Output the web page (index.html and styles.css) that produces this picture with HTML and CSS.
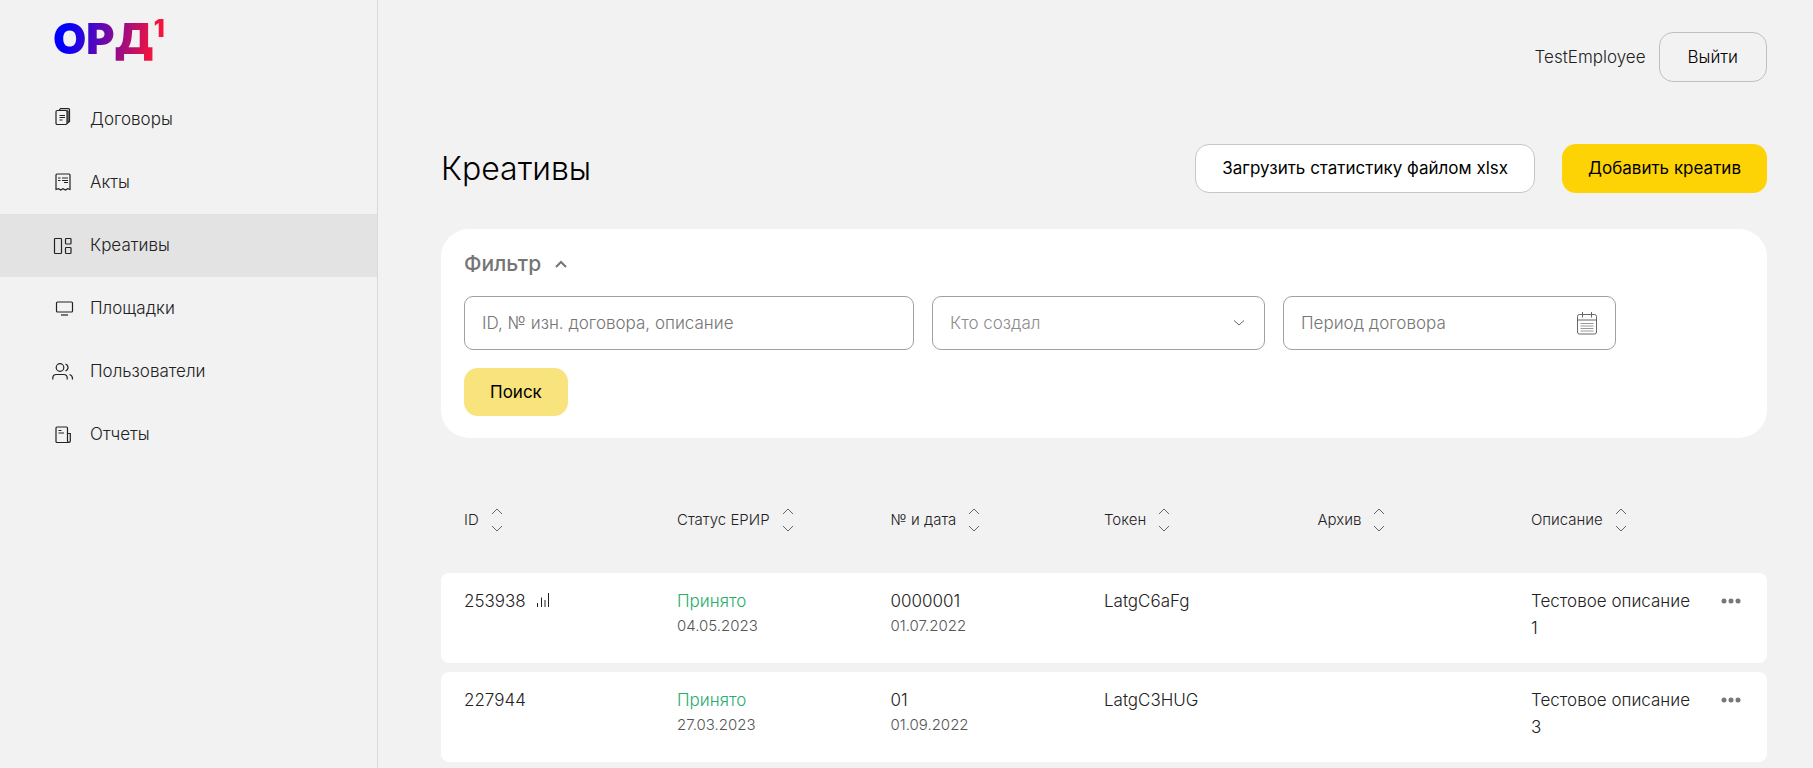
FILE: index.html
```html
<!DOCTYPE html>
<html lang="ru">
<head>
<meta charset="utf-8">
<meta name="viewport" content="width=device-width, initial-scale=1">
<title>ОРД — Креативы</title>
<link rel="stylesheet" href="styles.css">
</head>
<body>
<svg class="sprite" aria-hidden="true">
  <symbol id="sort" viewBox="0 0 12 26"><path d="M1 7l5-5 5 5M1 19l5 5 5-5"/></symbol>
  <symbol id="dots" viewBox="0 0 20 6"><circle cx="3" cy="3" r="2.5"/><circle cx="10" cy="3" r="2.5"/><circle cx="17" cy="3" r="2.5"/></symbol>
</svg>
<div class="app">
  <aside class="sidebar">
    <a class="logo" href="#" aria-label="ОРД 1"><span class="logo-word">ОРД</span><span class="logo-one">1</span></a>
    <nav class="nav">
      <a class="nav-item" href="#"><svg class="icon" viewBox="0 0 24 24"><rect x="4" y="2.500" width="11" height="14" rx="1.2"/><path d="M7 2.500L8.500 .6h8a1 1 0 0 1 1 1v11.900l-2.500 2M15 2.500l1 .8v11.500M7.500 7.500h5.500M7.500 9.500h5.500M7.500 12h3"/></svg>Договоры</a>
      <a class="nav-item" href="#"><svg class="icon" viewBox="0 0 24 24"><path d="M4 18.500V4a1 1 0 0 1 1-1h12a1 1 0 0 1 1 1v14.500l-2.300-.8-2.300 1.300-2.400-1.300-2.300 1.300-2.300-1.300-2.400.8z"/><path d="M6 7h2.500M10 7h6M6 9.500h2.500M10 9.500h6M12 11.500h4"/></svg>Акты</a>
      <a class="nav-item nav-item--active" href="#" aria-current="page"><svg class="icon" viewBox="0 0 24 24"><rect x="2.500" y="4.500" width="7" height="15" rx=".8"/><rect x="13.500" y="4.500" width="5.500" height="5.500" rx=".8"/><rect x="13.500" y="13.500" width="5.500" height="6" rx=".8"/></svg>Креативы</a>
      <a class="nav-item" href="#"><svg class="icon" viewBox="0 0 24 24"><rect x="4.500" y="5" width="16" height="10" rx="1"/><path d="M9 18h7"/></svg>Площадки</a>
      <a class="nav-item" href="#"><svg class="icon" viewBox="0 0 24 24"><circle cx="8" cy="7.500" r="3.800"/><path d="M.8 19.500v-1.500a3.500 3.500 0 0 1 3.500-3.500h7.400a3.500 3.500 0 0 1 3.500 3.500v1.500M13.500 4q2.500 1 2.500 3.500T13.500 11M17.500 14.500q3 1 3 4v1"/></svg>Пользователи</a>
      <a class="nav-item" href="#"><svg class="icon" viewBox="0 0 24 24"><path d="M17 19.500H5a1 1 0 0 1-1-1V5a1 1 0 0 1 1-1h9.500a1 1 0 0 1 1 1v13a1.400 1.400 0 0 0 2.800 0v-7.500h-2.800M6.500 7.500h3M6.500 10h5.500"/></svg>Отчеты</a>
    </nav>
  </aside>
  <main class="main">
    <header class="topbar">
      <span class="user">TestEmployee</span>
      <button class="btn btn--ghost" type="button">Выйти</button>
    </header>
    <div class="heading">
      <h1 class="title">Креативы</h1>
      <button class="btn btn--white" type="button">Загрузить статистику файлом xlsx</button>
      <button class="btn btn--primary" type="button">Добавить креатив</button>
    </div>
    <form class="filter">
      <button class="filter-toggle" type="button" aria-expanded="true">Фильтр<svg class="toggle-icon" viewBox="0 0 14 10"><path d="M2 8l5-5 5 5"/></svg></button>
      <div class="filter-fields">
        <input class="field field--wide" type="text" aria-label="Поиск" placeholder="ID, № изн. договора, описание">
        <div class="field-wrap">
          <select class="field field--select" aria-label="Кто создал"><option>Кто создал</option></select>
          <svg class="field-icon field-icon--chevron" viewBox="0 0 12 8"><path d="M1 1.500l5 4.500 5-4.500"/></svg>
        </div>
        <div class="field-wrap">
          <input class="field" type="text" aria-label="Период договора" placeholder="Период договора">
          <svg class="field-icon field-icon--calendar" viewBox="0 0 22 24"><rect x="1.500" y="3.500" width="19" height="19.500" rx="2"/><path d="M1.500 9h19M6.500 1v5.500M15.500 1v5.500"/><path class="thin" d="M4.500 12.500h13M4.500 15h13M4.500 17.500h13M4.500 20h13"/></svg>
        </div>
      </div>
      <button class="btn btn--search" type="submit">Поиск</button>
    </form>
    <table class="table">
      <colgroup><col class="col-first"><col class="col"><col class="col"><col class="col"><col class="col"><col class="col-desc"><col></colgroup>
      <thead>
        <tr>
          <th><button class="sort" type="button">ID<svg class="sort-icon"><use href="#sort"/></svg></button></th>
          <th><button class="sort" type="button">Статус ЕРИР<svg class="sort-icon"><use href="#sort"/></svg></button></th>
          <th><button class="sort" type="button">№ и дата<svg class="sort-icon"><use href="#sort"/></svg></button></th>
          <th><button class="sort" type="button">Токен<svg class="sort-icon"><use href="#sort"/></svg></button></th>
          <th><button class="sort" type="button">Архив<svg class="sort-icon"><use href="#sort"/></svg></button></th>
          <th colspan="2"><button class="sort" type="button">Описание<svg class="sort-icon"><use href="#sort"/></svg></button></th>
        </tr>
      </thead>
      <tbody>
        <tr>
          <td>253938<svg class="stats" viewBox="0 0 14 15"><path d="M1.500 11v4M5.500 5.500V15M9 8v7M12.500 1v14"/></svg></td>
          <td><span class="ok">Принято</span><span class="date">04.05.2023</span></td>
          <td>0000001<span class="date">01.07.2022</span></td>
          <td>LatgC6aFg</td>
          <td></td>
          <td class="desc">Тестовое описание 1</td>
          <td><button class="more" type="button" aria-label="Действия"><svg class="dots"><use href="#dots"/></svg></button></td>
        </tr>
        <tr>
          <td>227944</td>
          <td><span class="ok">Принято</span><span class="date">27.03.2023</span></td>
          <td>01<span class="date">01.09.2022</span></td>
          <td>LatgC3HUG</td>
          <td></td>
          <td class="desc">Тестовое описание 3</td>
          <td><button class="more" type="button" aria-label="Действия"><svg class="dots"><use href="#dots"/></svg></button></td>
        </tr>
      </tbody>
    </table>
  </main>
</div>
</body>
</html>
```
FILE: styles.css
```css
* { box-sizing: border-box; }

body {
  margin: 0;
  background: #f2f2f2;
  color: #222;
  font-family: Inter, Roboto, "Liberation Sans", sans-serif;
  font-size: 17px;
  font-weight: 300;
  line-height: 27px;
}

button, input, select { font: inherit; color: inherit; }
button { cursor: pointer; }
svg { fill: none; stroke: currentColor; flex: none; }

.sprite { display: none; }

.app { display: flex; min-height: 100vh; }

/* Sidebar */
.sidebar {
  flex: none;
  width: 378px;
  border-right: 1px solid #d9d9d9;
}

.logo {
  display: flex;
  align-items: flex-start;
  width: max-content;
  height: 88px;
  margin-left: 53px;
  padding-top: 17px;
  color: transparent;
  background: linear-gradient(100deg, #00f 15%, #f5143c 85%);
  background-clip: text;
  -webkit-background-clip: text;
  font-weight: 900;
  text-decoration: none;
}
.logo-word { font-size: 43px; line-height: 43px; }
.logo-one { font-size: 24px; line-height: 24px; }

.nav-item {
  display: flex;
  align-items: center;
  gap: 14px;
  height: 63px;
  padding-left: 52px;
  color: #222;
  text-decoration: none;
}
.nav-item--active { background: #e3e3e3; }
.icon { width: 24px; height: 24px; stroke-width: 1.2; }

/* Main column */
.main { flex: 1; min-width: 0; padding: 32px 46px 0 63px; }

.topbar {
  display: flex;
  align-items: center;
  justify-content: flex-end;
  gap: 13px;
}

.btn {
  height: 49px;
  padding: 0 25px;
  border: 1px solid transparent;
  border-radius: 14px;
  color: #000;
  font-weight: 400;
  white-space: nowrap;
}
.btn--ghost { height: 50px; padding: 0 28px; border-color: #bfbfbf; background: transparent; font-weight: 300; }
.btn--white { padding: 0 26px; border-color: #c6c6c6; background: #fff; }
.btn--primary { background: #fdd306; }
.btn--search { height: 48px; background: #f8e37c; }

.heading { display: flex; align-items: center; gap: 27px; margin-top: 62px; }
.title {
  flex: 1;
  margin: 0;
  color: #000;
  font-size: 32px;
  font-weight: 300;
  line-height: 49px;
}

/* Filter */
.filter {
  margin-top: 36px;
  padding: 20px 23px 22px;
  border-radius: 28px;
  background: #fff;
}
.filter-toggle {
  display: flex;
  align-items: center;
  gap: 13px;
  padding: 0;
  border: 0;
  background: none;
  color: #757575;
  font-size: 21px;
  font-weight: 500;
  line-height: 30px;
}
.toggle-icon { width: 14px; height: 10px; stroke-width: 2; }
.filter-fields { display: flex; gap: 18px; margin: 17px 0 18px; }
.field {
  width: 333px;
  height: 54px;
  padding: 0 17px;
  border: 1px solid #a0a0a0;
  border-radius: 9px;
  background: #fff;
}
.field::placeholder { color: #757575; opacity: 1; }
.field--wide { width: 450px; }
.field--select { appearance: none; color: #8c8c8c; }
.field-wrap { position: relative; }
.field-icon { position: absolute; top: 0; bottom: 0; margin: auto; color: #666; pointer-events: none; }
.field-icon--chevron { right: 20px; width: 12px; height: 8px; }
.field-icon--calendar { right: 18px; width: 22px; height: 24px; }
.thin { stroke: #999; }

/* Table */
.table {
  width: 100%;
  margin-top: 37px;
  border-spacing: 0 9px;
  table-layout: fixed;
}
.col-first { width: 17.8%; }
.col { width: 16.1%; }
.col-desc { width: 13.2%; }
.table th { height: 80px; padding: 0 0 9px; font-weight: 300; text-align: left; }
.table th:first-child, .table td:first-child { padding-left: 23px; }
.table td { height: 90px; padding: 15px 0; background: #fff; vertical-align: top; }
.table td:first-child { border-radius: 8px 0 0 8px; }
.table td:last-child { border-radius: 0 8px 8px 0; }
.table .desc { padding-right: 10px; }
.sort {
  display: flex;
  align-items: center;
  gap: 12px;
  padding: 0;
  border: 0;
  background: none;
  font-size: 15px;
}
.sort-icon { width: 12px; height: 26px; color: #666; }
.stats { width: 14px; height: 15px; margin-left: 10px; }
.ok, .date { display: block; }
.ok { color: #27ae6b; }
.date { color: #555; font-size: 15px; line-height: 22px; }
.more { display: flex; align-items: center; height: 25px; margin-left: 15px; padding: 0; border: 0; background: none; color: #777; }
.dots { width: 20px; height: 6px; fill: currentColor; stroke: none; }
```
